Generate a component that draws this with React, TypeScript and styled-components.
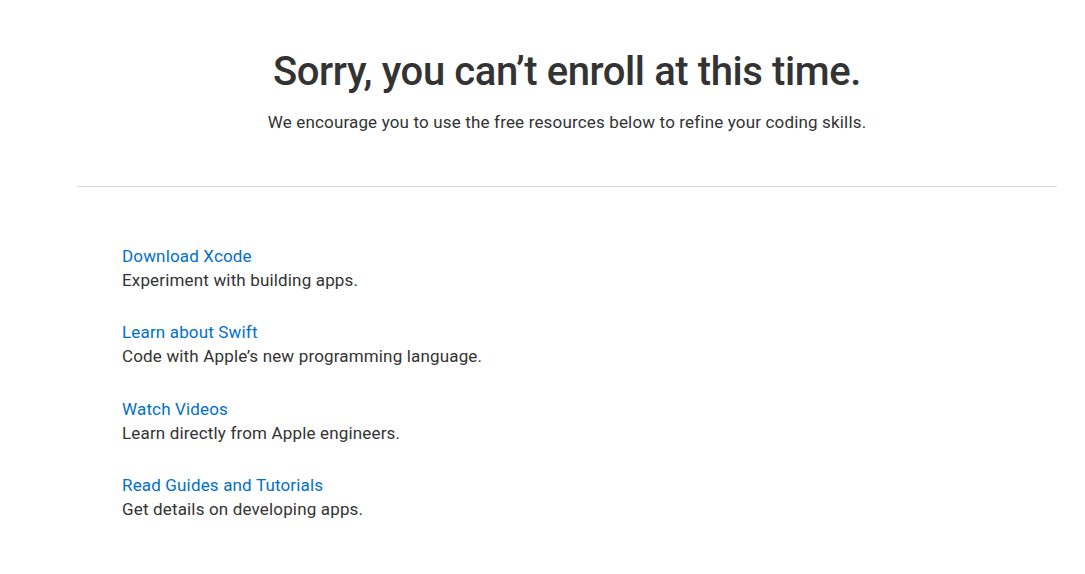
import React from "react";
import styled, { createGlobalStyle } from "styled-components";

const Global = createGlobalStyle`
  html, body { margin: 0; padding: 0; background: #fff; }
  body { font-family: Roboto, "Liberation Sans", sans-serif; color: #333; -webkit-font-smoothing: antialiased; }
`;

const Page = styled.main`
  width: 980px;
  margin-left: 77px;
`;

const Hero = styled.header`
  display: flex;
  flex-direction: column;
  align-items: center;
  padding-top: 48px;
  padding-bottom: 51px;
  border-bottom: 1px solid #d6d6d6;
`;

const Title = styled.h1`
  margin: 0;
  font-size: 40px;
  line-height: 48px;
  font-weight: 500;
  letter-spacing: -0.4px;
  color: #333;
`;

const Subtitle = styled.p`
  margin: 14px 0 0;
  font-size: 17px;
  line-height: 25px;
  letter-spacing: 0.16px;
  color: #333;
`;

const List = styled.ul`
  list-style: none;
  margin: 0;
  padding: 57px 0 0 45px;
  display: flex;
  flex-direction: column;
  gap: 28.4px;
`;

const Item = styled.li`
  display: flex;
  flex-direction: column;
  font-size: 17px;
  line-height: 24px;
  letter-spacing: 0.16px;
`;

const Link = styled.a`
  color: #0070c9;
  text-decoration: none;
`;

const Desc = styled.span`
  color: #333;
`;

const items = [
  ["Download Xcode", "Experiment with building apps."],
  ["Learn about Swift", "Code with Apple’s new programming language."],
  ["Watch Videos", "Learn directly from Apple engineers."],
  ["Read Guides and Tutorials", "Get details on developing apps."],
];

export default function App() {
  return (
    <>
      <Global />
      <Page>
        <Hero>
          <Title>Sorry, you can’t enroll at this time.</Title>
          <Subtitle>We encourage you to use the free resources below to refine your coding skills.</Subtitle>
        </Hero>
        <List>
          {items.map(([l, d]) => (
            <Item key={l}>
              <Link href="#">{l}</Link>
              <Desc>{d}</Desc>
            </Item>
          ))}
        </List>
      </Page>
    </>
  );
}
